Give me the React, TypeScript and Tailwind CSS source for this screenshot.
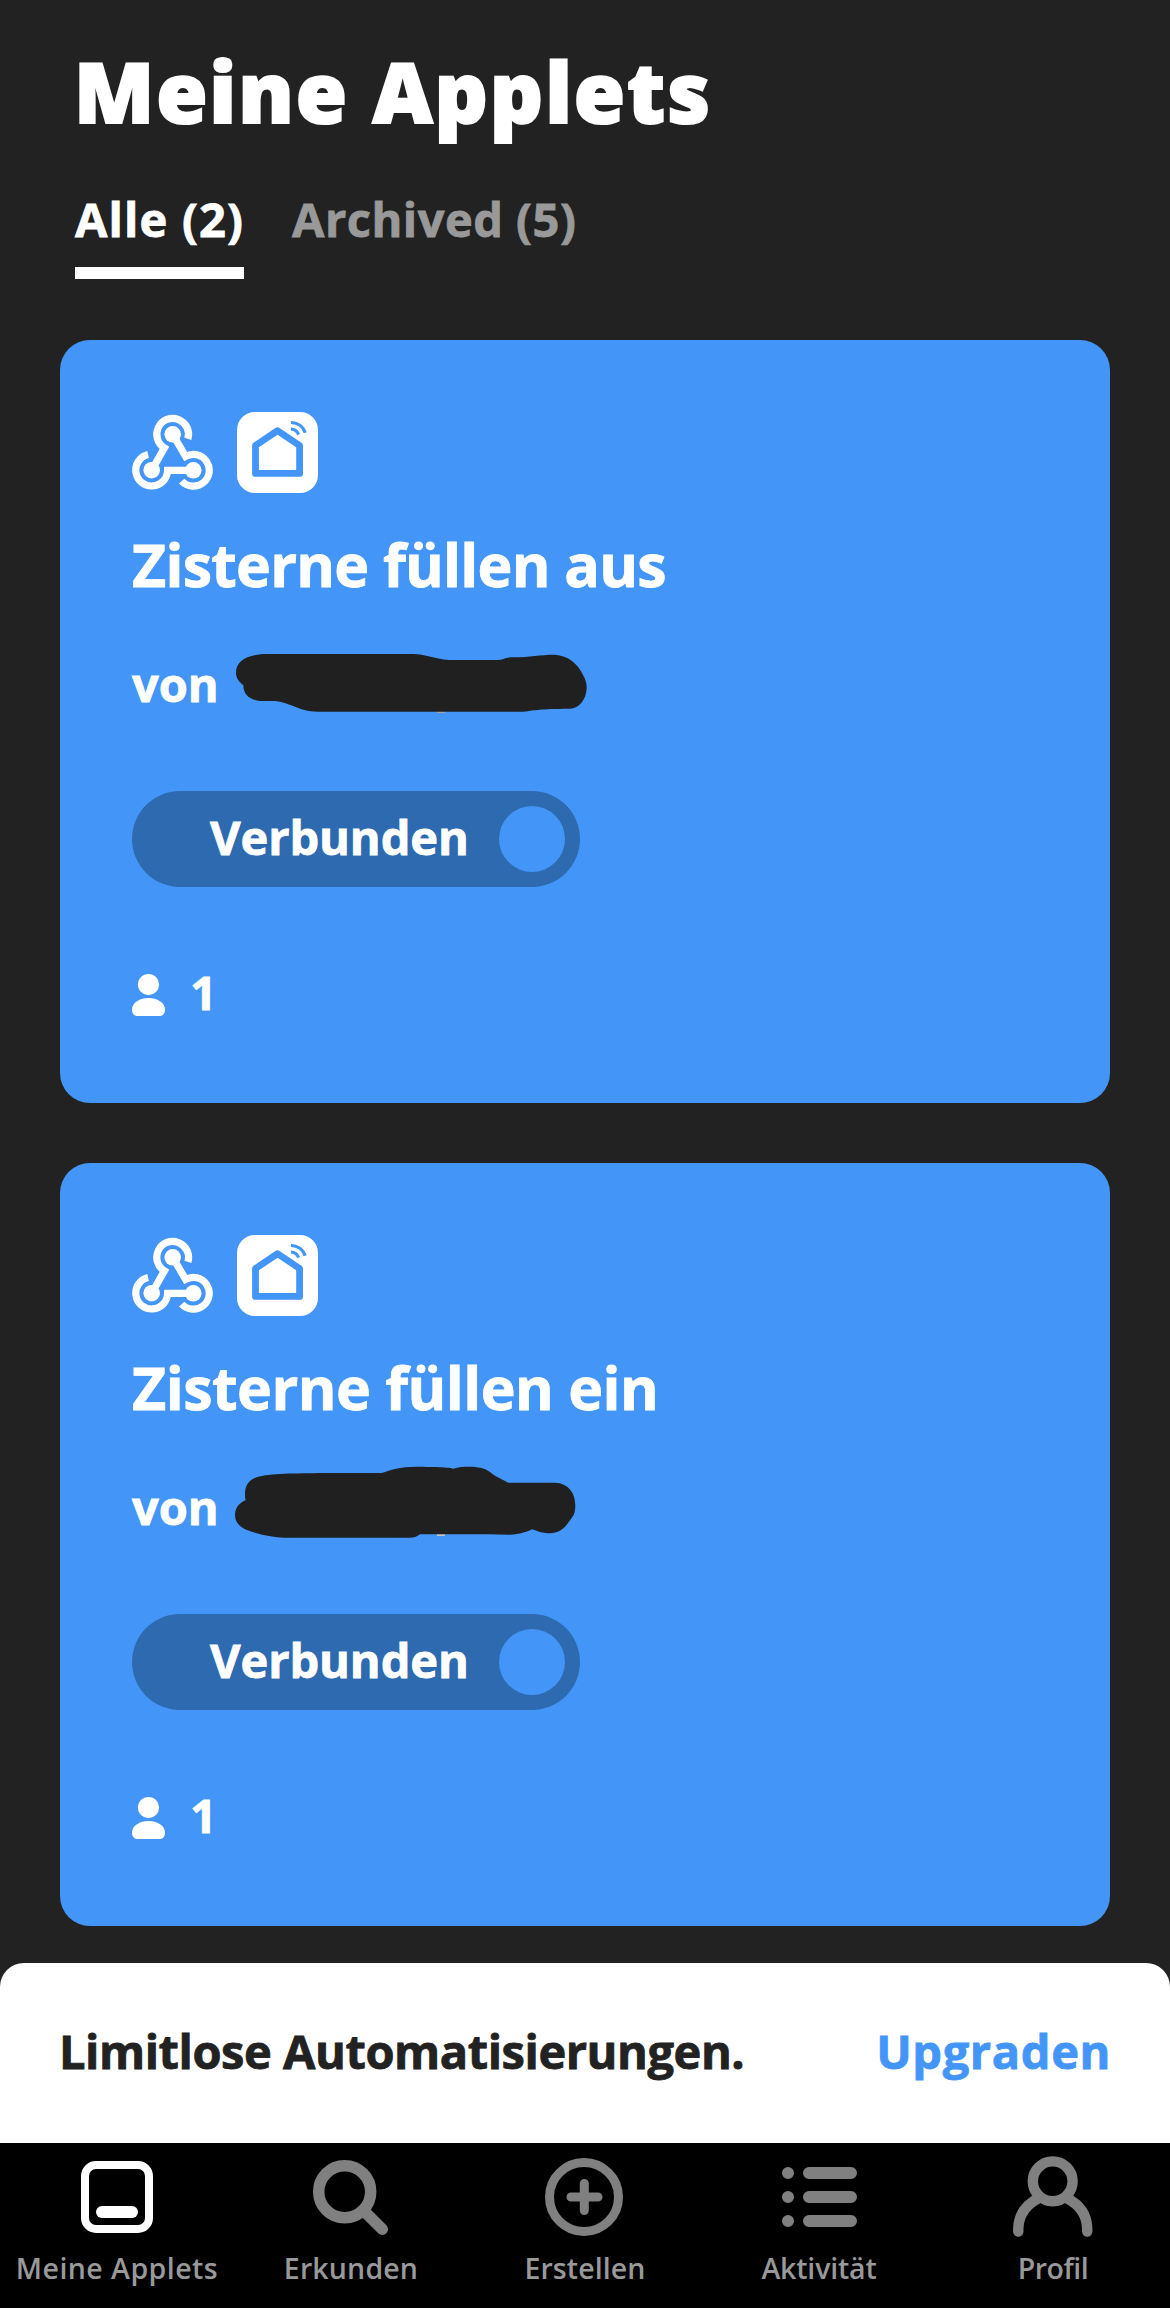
import React from "react";

interface Applet {
  title: string;
  titleClass: string;
  author: React.ReactNode;
  users: number;
}

const WebhookIcon = () => (
  <svg width="81" height="81" viewBox="0 0 81 81" fill="none" stroke="white" strokeWidth="7.2">
    <path d="M19.7 58.2L32.4 35.9A15.9 15.9 0 1 1 55.9 26.9" />
    <path d="M40.7 22.3L53.6 44.4A15.9 15.9 0 1 1 49.7 69.1" />
    <path d="M61.3 58.3H35.6A15.9 15.9 0 1 1 16.1 42.6" />
    <g fill="white" stroke="none">
      <circle cx="40.7" cy="22.3" r="8.3" />
      <circle cx="19.7" cy="58.2" r="8.3" />
      <circle cx="61.3" cy="58.3" r="8.3" />
    </g>
  </svg>
);

const SmartHomeIcon = () => (
  <svg width="81" height="81" viewBox="0 0 81 81" fill="none" stroke="#4395f8">
    <rect width="81" height="81" rx="18" fill="white" stroke="none" />
    <path d="M18.5 61.4V33.5L40.6 18.7L62.6 33.5V61.4Z" strokeWidth="6.8" strokeLinejoin="round" />
    <path d="M54 10.4A14.6 14.6 0 0 1 68.2 20.8" strokeWidth="3" />
    <path d="M54 17A8.6 8.6 0 0 1 61.6 22.6" strokeWidth="3.2" />
  </svg>
);

const UserIcon = () => (
  <svg width="33" height="42" viewBox="0 0 33 42" fill="white">
    <circle cx="16.5" cy="10.6" r="10.6" />
    <path d="M0 35.5C0 28.5 8 24 16.5 24S33 28.5 33 35.5C33 39.5 31 42 27.5 42H5.5C2 42 0 39.5 0 35.5Z" />
  </svg>
);

const applets: Applet[] = [
  {
    title: "Zisterne füllen aus",
    titleClass: "tracking-[-0.75px]",
    author: (
      <svg className="-mt-px ml-[17px]" width="352" height="60" viewBox="0 0 352 60">
        <rect x="201" y="57" width="8" height="3" fill="#9aa5ad" />
        <path
          fill="#202020"
          d="M0 19.7C0 7 12 1 32.3 1H174C194 1 198 7 217 7H259C269 7 268 4.3 277 4.3C293 4.5 303 1.7 319 1.7C332 2.5 342 11 347 22C350 27 350.7 31 350.7 35.3C350 47 343 55.7 334 55.7C302 56 301 57 287 58.7H84C62 59.5 54 48 36 48H26.7C16 48 7.3 43 7.3 32C3 29 0 25 0 19.7Z"
        />
      </svg>
    ),
    users: 1,
  },
  {
    title: "Zisterne füllen ein",
    titleClass: "tracking-[-0.51px]",
    author: (
      <svg className="-mt-[11px] ml-[15px]" width="342" height="72" viewBox="0 0 342 72">
        <rect x="203" y="67" width="8" height="3" fill="#c4c4c4" />
        <path
          fill="#202020"
          d="M1 49C1 42 5 37 11.7 34C11 32 11 30 11 27.3C11 19 16 13 22.7 11.3C36 7 60 7.6 89.3 7H147.7C157 4 165 .7 182.7 .7C193 1 214 .7 219.3 2.7C224 1 230 .7 236 .7C253 1 255 6 261 9.7L274.3 16.7H321C334 17 341.3 27 341.3 39C341.3 49 339 50 334 57C330 63 324 67.3 316 67.3C308 67.3 303 65 298.3 63.3C292 66 286 68.3 276 68.7L253 68.3H186C182 71 180 71.7 176 71.7H56C38 71.7 23 68 11 63.3C5 60 1 56 1 49Z"
        />
      </svg>
    ),
    users: 1,
  },
];

const AppletCard = ({ title, titleClass, author, users }: Applet) => (
  <div className="h-[763px] rounded-[30px] bg-[#4395f8] p-[72px] text-white">
    <div className="flex gap-6">
      <WebhookIcon />
      <SmartHomeIcon />
    </div>
    <h2 className={`mt-[35px] whitespace-nowrap text-[59px] leading-[72px] font-bold ${titleClass}`}>
      {title}
    </h2>
    <div className="mt-[54px] flex h-[60px] items-start">
      <span className="w-[87px] text-[47px] leading-[60px] font-bold">von</span>
      {author}
    </div>
    <div className="mt-[77px] flex h-24 w-[448px] items-center justify-between rounded-full bg-[#2d6aaf] pr-[15px] pl-[78px]">
      <span className="-mt-1 text-[47px] leading-[60px] font-bold tracking-[-0.09px]">Verbunden</span>
      <span className="h-[66px] w-[66px] rounded-full bg-[#4395f8]" />
    </div>
    <div className="mt-[75px] flex h-[60px] gap-[25px]">
      <div className="pt-3">
        <UserIcon />
      </div>
      <span className="text-[47px] leading-[60px] font-bold">{users}</span>
    </div>
  </div>
);

const navItems = [
  {
    label: "Meine Applets",
    labelClass: "tracking-[0.46px]",
    icon: (
      <g stroke="white">
        <rect x="10" y="10" width="64" height="64" rx="11" strokeWidth="8" />
        <path d="M27 57H57" strokeWidth="12" />
      </g>
    ),
  },
  {
    label: "Erkunden",
    labelClass: "tracking-[0.16px]",
    icon: (
      <g strokeWidth="11.5">
        <circle cx="35.7" cy="36.7" r="26" />
        <path d="M55 56L73.3 74.3" />
      </g>
    ),
  },
  {
    label: "Erstellen",
    labelClass: "tracking-[0.11px]",
    icon: (
      <g strokeWidth="9">
        <circle cx="41" cy="42" r="34.5" />
        <path d="M41.3 28.5V55.5M28 42H55" />
      </g>
    ),
  },
  {
    label: "Aktivität",
    labelClass: "tracking-[-0.17px]",
    icon: <path strokeWidth="12" d="M11 18H11.01M11 42H11.01M11 66H11.01M32 18H74M32 42H74M32 66H74" />,
  },
  {
    label: "Profil",
    labelClass: "tracking-[-0.49px]",
    icon: (
      <g strokeWidth="10.4">
        <circle cx="41.7" cy="26.3" r="19.9" />
        <path d="M7.3 76.5V73C7.8 60 15 49.5 28 43M76.2 76.5V73C75.7 60 68.5 49.5 55.5 43" />
      </g>
    ),
  },
];

const App = () => {
  return (
    <div className="flex h-[2308px] w-[1170px] flex-col overflow-hidden bg-[#222] font-['Open_Sans',sans-serif] [-webkit-text-stroke:0.8px_currentColor]">
      <header className="px-[75px] pt-[51px] text-white">
        <h1 className="-ml-px text-[83px] leading-[80px] font-extrabold tracking-[1.9px] [-webkit-text-stroke:2px_currentColor]">
          Meine Applets
        </h1>
        <div className="mt-[58px] flex gap-12 text-[47px] leading-[60px] font-bold">
          <div className="w-[169px] border-b-12 border-white pb-[18px] whitespace-nowrap tracking-[1.16px]">
            Alle (2)
          </div>
          <div className="tracking-[0.5px] text-[#999]">Archived (5)</div>
        </div>
      </header>

      <main className="mt-[61px] flex flex-col gap-[60px] px-[60px]">
        {applets.map((applet) => (
          <AppletCard key={applet.title} {...applet} />
        ))}
      </main>

      <div className="mt-[37px] flex h-[180px] justify-between rounded-t-[24px] bg-white pt-[58px] pr-[59px] pl-[59px] text-[47px] leading-[60px] font-bold">
        <span className="tracking-[-0.45px] text-[#222]">Limitlose Automatisierungen.</span>
        <span className="tracking-[0.6px] text-[#4395f8]">Upgraden</span>
      </div>

      <nav className="grid h-[165px] grid-cols-5 bg-black [-webkit-text-stroke:0]">
        {navItems.map(({ label, labelClass, icon }) => (
          <div key={label} className="flex flex-col items-center pt-3">
            <svg
              width="84"
              height="84"
              viewBox="0 0 84 84"
              fill="none"
              stroke="#808080"
              strokeLinecap="round"
            >
              {icon}
            </svg>
            <span
              className={`mt-[11px] text-[28.5px] leading-9 font-semibold whitespace-nowrap text-[#999] ${labelClass}`}
            >
              {label}
            </span>
          </div>
        ))}
      </nav>
    </div>
  );
};

export default App;
